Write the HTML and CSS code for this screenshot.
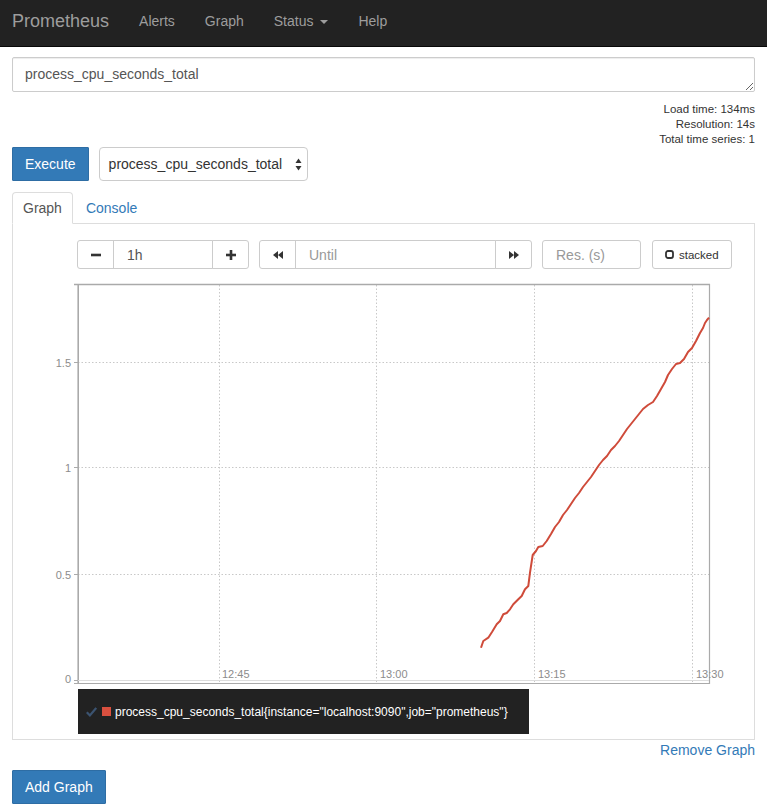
FILE: index.html
```html
<!DOCTYPE html>
<html>
<head>
<meta charset="utf-8">
<title>Prometheus Time Series Collection and Processing Server</title>
<link rel="stylesheet" href="styles.css">
</head>
<body>
<nav class="navbar">
  <a class="brand">Prometheus</a>
  <ul class="nav">
    <li class="nav-link">Alerts</li>
    <li class="nav-link">Graph</li>
    <li class="nav-link">Status <span class="caret"></span></li>
    <li class="nav-link">Help</li>
  </ul>
</nav>

<div class="container">
  <textarea class="expr" rows="1">process_cpu_seconds_total</textarea>

  <div class="stats">
    <div>Load time: 134ms</div>
    <div>Resolution: 14s</div>
    <div>Total time series: 1</div>
  </div>

  <div class="exec-row">
    <button class="btn-primary">Execute</button>
    <div class="select">
      <span>process_cpu_seconds_total</span>
      <svg class="select-arrows" width="7" height="13" viewBox="0 0 7 13"><path d="M3.5 0.5 L6.5 5 L0.5 5 Z" fill="#333"/><path d="M3.5 12.5 L6.5 8 L0.5 8 Z" fill="#333"/></svg>
    </div>
  </div>

  <ul class="tabs">
    <li class="tab active">Graph</li>
    <li class="tab">Console</li>
  </ul>

  <div class="panel">
    <div class="controls">
      <div class="group">
        <div class="ctl-btn"><svg width="10" height="10" viewBox="0 0 10 10"><rect x="0" y="3.7" width="10" height="2.6" fill="#333"/></svg></div>
        <div class="ctl-input w-range">1h</div>
        <div class="ctl-btn"><svg width="10" height="10" viewBox="0 0 10 10"><rect x="0" y="3.7" width="10" height="2.6" fill="#333"/><rect x="3.7" y="0" width="2.6" height="10" fill="#333"/></svg></div>
      </div>
      <div class="group">
        <div class="ctl-btn"><svg width="10" height="8" viewBox="0 0 10 8"><path d="M0 4 L5 0 L5 8 Z M5 4 L10 0 L10 8 Z" fill="#333"/></svg></div>
        <div class="ctl-input w-until placeholder">Until</div>
        <div class="ctl-btn"><svg width="10" height="8" viewBox="0 0 10 8"><path d="M10 4 L5 0 L5 8 Z M5 4 L0 0 L0 8 Z" fill="#333"/></svg></div>
      </div>
      <div class="ctl-input w-res placeholder">Res. (s)</div>
      <div class="stacked-btn">
        <svg width="9" height="9" viewBox="0 0 9 9"><rect x="1" y="1" width="7" height="7" rx="2" fill="none" stroke="#333" stroke-width="1.8"/></svg>
        <span>stacked</span>
      </div>
    </div>

    <svg class="chart" width="741" height="416" viewBox="13 270 741 416">
      <g stroke="#c8c8c8" stroke-width="1" stroke-dasharray="1.5,2" fill="none">
        <line x1="78" y1="361.5" x2="709" y2="361.5"/>
        <line x1="78" y1="466.5" x2="709" y2="466.5"/>
        <line x1="78" y1="573.5" x2="709" y2="573.5"/>
        <line x1="219.5" y1="284" x2="219.5" y2="683"/>
        <line x1="376.5" y1="284" x2="376.5" y2="683"/>
        <line x1="534.5" y1="284" x2="534.5" y2="683"/>
        <line x1="692.5" y1="284" x2="692.5" y2="683"/>
      </g>
      <g stroke="#aaa" fill="none">
        <line x1="74" y1="283.5" x2="710" y2="283.5" stroke-width="1.3"/>
        <line x1="78.2" y1="283" x2="78.2" y2="683" stroke-width="1.6"/>
        <line x1="709.5" y1="283" x2="709.5" y2="683" stroke-width="1.2"/>
        <line x1="78" y1="679.5" x2="709" y2="679.5" stroke="#ddd"/>
        <line x1="74" y1="682.5" x2="710" y2="682.5" stroke-width="1.2"/>
        <line x1="74" y1="361.5" x2="78" y2="361.5"/>
        <line x1="74" y1="466.5" x2="78" y2="466.5"/>
        <line x1="74" y1="573.5" x2="78" y2="573.5"/>
        <line x1="74" y1="679.5" x2="78" y2="679.5"/>
      </g>
      <g class="axis-label" text-anchor="end">
        <text x="71" y="365.5">1.5</text>
        <text x="71" y="470.5">1</text>
        <text x="71" y="577.5">0.5</text>
        <text x="71" y="682">0</text>
      </g>
      <g class="axis-label">
        <text x="222" y="677">12:45</text>
        <text x="380" y="677">13:00</text>
        <text x="538" y="677">13:15</text>
        <text x="696" y="677">13:30</text>
      </g>
      <polyline fill="none" stroke="#cf4b3a" stroke-width="2" stroke-linejoin="round" points="481,646.7 483.3,640 488.3,636.7 492,631 496.7,623.3 500,620 503.3,613.3 506.7,612 510,608.3 513.3,603.3 518.3,598.3 521.7,595 525,588.3 528.3,585 530,571.7 532.7,554 536,550 538.3,546 542.7,545 546.7,540 551,533 555,526 559,521 563,514 567,509 571,503 575,497 579,492 583,486 587,481 591,476 595,470 599,464 603,459 607,455 611,449 615,445 619,440 623,434 627,428 631,423 635,418 639,413 643,408 648,404 653,401 657,395 661,388 665,381 668,374 672,368 676,363 680,362 684,358 688,351 692,347 696,340 700,332 703,327 705,322 707,319 709,316.7"/>
    </svg>

    <div class="legend">
      <svg class="check" width="11" height="10" viewBox="0 0 11 10"><path d="M0.8 5.2 L3.9 8.4 L10.2 0.9" fill="none" stroke="#3b5370" stroke-width="2.2"/></svg>
      <span class="swatch"></span>
      <span class="series">process_cpu_seconds_total{instance="localhost:9090",job="prometheus"}</span>
    </div>
  </div>

  <div class="remove"><a class="link">Remove Graph</a></div>
  <button class="btn-primary add">Add Graph</button>
</div>
</body>
</html>
```

FILE: styles.css
```css
html, body {
  margin: 0;
  padding: 0;
}
body {
  font-family: "Liberation Sans", Arial, sans-serif;
  font-size: 14px;
  line-height: 20px;
  color: #333;
  background: #fff;
}

/* navbar */
.navbar {
  display: flex;
  align-items: flex-start;
  height: 46px;
  background: #222;
  border-bottom: 1px solid #080808;
}
.brand {
  padding: 11px 15px 0 12px;
  font-size: 18px;
  line-height: 20px;
  color: #9d9d9d;
}
.nav {
  display: flex;
  list-style: none;
  margin: 0;
  padding: 0;
}
.nav-link {
  padding: 11px 15px 0;
  line-height: 20px;
  color: #9d9d9d;
}
.caret {
  display: inline-block;
  width: 0;
  height: 0;
  margin-left: 3px;
  vertical-align: middle;
  border-top: 4px solid #9d9d9d;
  border-left: 4px solid transparent;
  border-right: 4px solid transparent;
}

/* main */
.container {
  padding: 0 12px;
}
.expr {
  display: block;
  box-sizing: border-box;
  width: 100%;
  height: 35px;
  margin: 10px 0 0;
  padding: 6px 12px 7px;
  border: 1px solid #ccc;
  border-radius: 2px;
  box-shadow: inset 0 1px 1px rgba(0,0,0,0.075);
  font-family: "Liberation Sans", Arial, sans-serif;
  font-size: 14px;
  line-height: 20px;
  color: #555;
  resize: vertical;
  overflow: hidden;
}
.stats {
  margin-top: 10px;
  text-align: right;
  font-size: 11.5px;
  line-height: 15px;
  color: #333;
}
.exec-row {
  display: flex;
  gap: 10px;
}
.btn-primary {
  box-sizing: border-box;
  height: 34px;
  padding: 0 12px;
  border: 1px solid #2e6da4;
  border-radius: 1px;
  background: #337ab7;
  color: #fff;
  font-family: "Liberation Sans", Arial, sans-serif;
  font-size: 14px;
}
.select {
  box-sizing: border-box;
  width: 209px;
  height: 34px;
  display: flex;
  align-items: center;
  justify-content: space-between;
  padding: 0 5px 0 9px;
  border: 1px solid #ccc;
  border-radius: 4px;
  color: #333;
}
.select-arrows {
  display: block;
}

/* tabs */
.tabs {
  display: flex;
  list-style: none;
  margin: 11px 0 0;
  padding: 0;
  border-bottom: 1px solid #ddd;
}
.tab {
  padding: 5px 10px;
  margin-bottom: -1px;
  margin-right: 2px;
  border: 1px solid transparent;
  border-radius: 4px 4px 0 0;
  color: #337ab7;
}
.tab.active {
  color: #555;
  background: #fff;
  border-color: #ddd #ddd #fff;
}
.panel {
  border: 1px solid #ddd;
  border-top: none;
  padding: 16px 0 5px;
}

/* controls */
.controls {
  display: flex;
  height: 29px;
  margin-left: 64px;
}
.group {
  display: flex;
  margin-right: 10px;
}
.ctl-btn,
.ctl-input,
.stacked-btn {
  box-sizing: border-box;
  height: 29px;
  border: 1px solid #ccc;
  background: #fff;
  display: flex;
  align-items: center;
}
.ctl-btn {
  width: 37px;
  justify-content: center;
}
.ctl-btn svg {
  display: block;
}
.group > * + * {
  margin-left: -1px;
}
.group > :first-child {
  border-radius: 3px 0 0 3px;
}
.group > :last-child {
  border-radius: 0 3px 3px 0;
}
.ctl-input {
  padding-left: 13px;
  color: #555;
}
.placeholder {
  color: #999;
}
.w-range { width: 100px; }
.w-until { width: 201px; }
.w-res {
  width: 99px;
  border-radius: 3px;
}
.stacked-btn {
  width: 80px;
  margin-left: 11px;
  padding-left: 12px;
  border-radius: 3px;
  font-size: 11.5px;
  color: #333;
}
.stacked-btn svg {
  display: block;
  margin-right: 5px;
}

/* chart */
.chart {
  display: block;
  margin-top: 2px;
}
.axis-label text {
  font-family: "Liberation Sans", Arial, sans-serif;
  font-size: 11px;
  fill: #8c8c8c;
}
.legend {
  box-sizing: border-box;
  display: flex;
  align-items: center;
  width: 451px;
  height: 45px;
  margin: 2px 0 0 65px;
  padding-left: 8px;
  background: #222;
  color: #fff;
  font-size: 12px;
}
.check {
  display: block;
  margin-right: 5px;
}
.swatch {
  width: 9px;
  height: 9px;
  background: #d9503f;
  margin-right: 4px;
}
.series {
  white-space: nowrap;
}

.remove {
  text-align: right;
  line-height: 20px;
}
.link {
  color: #337ab7;
}
.add {
  margin-top: 10px;
}
```
